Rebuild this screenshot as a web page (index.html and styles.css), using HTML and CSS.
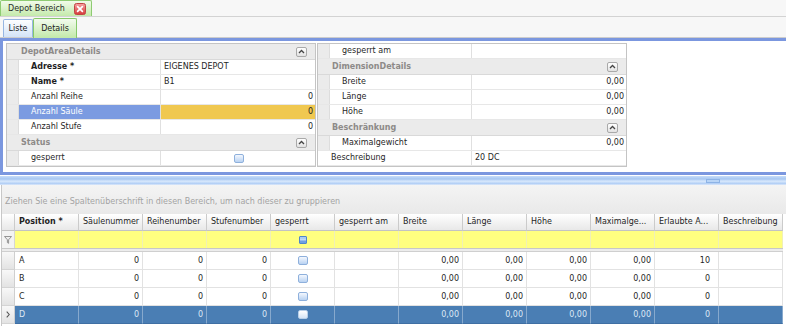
FILE: index.html
```html
<!DOCTYPE html>
<html lang="de">
<head>
<meta charset="utf-8">
<title>Depot Bereich</title>
<link rel="stylesheet" href="styles.css">
</head>
<body>
<div class="app">
  <div class="doc-tabs">
    <div class="doc-tab">
      <span>Depot Bereich</span>
      <span class="close"><svg width="12" height="12" viewBox="0 0 12 12"><defs><linearGradient id="rg" x1="0" y1="0" x2="0" y2="1"><stop offset="0" stop-color="#f7a3a3"/><stop offset="1" stop-color="#d63a3a"/></linearGradient></defs><rect x="0.5" y="0.5" width="11" height="11" rx="2" fill="url(#rg)" stroke="#c04444"/><path d="M3.6 3.6 L8.4 8.4 M8.4 3.6 L3.6 8.4" stroke="#fff" stroke-width="1.7" stroke-linecap="round"/></svg></span>
    </div>
  </div>
  <div class="view-tabs">
    <div class="vtab liste">Liste</div>
    <div class="vtab details">Details</div>
  </div>
  <div class="detail-panel">
    <div class="pgrid">
      <div class="pg-cat"><span class="cat-title">DepotAreaDetails</span><span class="collapse"><svg width="7" height="5" viewBox="0 0 7 5"><path d="M1 4 L3.5 1.5 L6 4" fill="none" stroke="#444" stroke-width="1.3"/></svg></span></div>
      <div class="pg-row"><span class="pg-strip"></span><span class="pg-label bold">Adresse *</span><span class="pg-value">EIGENES DEPOT</span></div>
      <div class="pg-row"><span class="pg-strip"></span><span class="pg-label bold">Name *</span><span class="pg-value">B1</span></div>
      <div class="pg-row"><span class="pg-strip"></span><span class="pg-label">Anzahl Reihe</span><span class="pg-value num">0</span></div>
      <div class="pg-row focused"><span class="pg-strip"></span><span class="pg-label">Anzahl Säule</span><span class="pg-value num">0</span></div>
      <div class="pg-row"><span class="pg-strip"></span><span class="pg-label">Anzahl Stufe</span><span class="pg-value num">0</span></div>
      <div class="pg-cat"><span class="cat-title">Status</span><span class="collapse"><svg width="7" height="5" viewBox="0 0 7 5"><path d="M1 4 L3.5 1.5 L6 4" fill="none" stroke="#444" stroke-width="1.3"/></svg></span></div>
      <div class="pg-row"><span class="pg-strip"></span><span class="pg-label">gesperrt</span><span class="pg-value center"><span class="chk"></span></span></div>
    </div>
    <div class="pgrid">
      <div class="pg-row"><span class="pg-strip"></span><span class="pg-label">gesperrt am</span><span class="pg-value"></span></div>
      <div class="pg-cat"><span class="cat-title">DimensionDetails</span><span class="collapse"><svg width="7" height="5" viewBox="0 0 7 5"><path d="M1 4 L3.5 1.5 L6 4" fill="none" stroke="#444" stroke-width="1.3"/></svg></span></div>
      <div class="pg-row"><span class="pg-strip"></span><span class="pg-label">Breite</span><span class="pg-value num">0,00</span></div>
      <div class="pg-row"><span class="pg-strip"></span><span class="pg-label">Länge</span><span class="pg-value num">0,00</span></div>
      <div class="pg-row"><span class="pg-strip"></span><span class="pg-label">Höhe</span><span class="pg-value num">0,00</span></div>
      <div class="pg-cat"><span class="cat-title">Beschränkung</span><span class="collapse"><svg width="7" height="5" viewBox="0 0 7 5"><path d="M1 4 L3.5 1.5 L6 4" fill="none" stroke="#444" stroke-width="1.3"/></svg></span></div>
      <div class="pg-row"><span class="pg-strip"></span><span class="pg-label">Maximalgewicht</span><span class="pg-value num">0,00</span></div>
      <div class="pg-row"><span class="pg-label top">Beschreibung</span><span class="pg-value">20 DC</span></div>
    </div>
  </div>
  <div class="splitter"><span class="grip"></span></div>
  <div class="grid-panel">
    <div class="groupbar">Ziehen Sie eine Spaltenüberschrift in diesen Bereich, um nach dieser zu gruppieren</div>
    <div class="grow ghead">
      <div class="gc ind"></div>
      <div class="gc bold">Position *</div>
      <div class="gc">Säulenummer</div>
      <div class="gc">Reihenumber</div>
      <div class="gc">Stufenumber</div>
      <div class="gc">gesperrt</div>
      <div class="gc">gesperrt am</div>
      <div class="gc">Breite</div>
      <div class="gc">Länge</div>
      <div class="gc">Höhe</div>
      <div class="gc">Maximalge...</div>
      <div class="gc">Erlaubte A...</div>
      <div class="gc">Beschreibung</div>
    </div>
    <div class="grow frow">
      <div class="gc ind"><svg width="8" height="8" viewBox="0 0 8 8"><path d="M0.5 0.5 H7.5 L4.6 3.8 V7.3 L3.4 6.6 V3.8 Z" fill="#eeeeee" stroke="#8a8a8a" stroke-width="0.9" stroke-linejoin="round"/></svg></div>
      <div class="gc"></div>
      <div class="gc"></div>
      <div class="gc"></div>
      <div class="gc"></div>
      <div class="gc cb"><span class="fchk"></span></div>
      <div class="gc"></div>
      <div class="gc"></div>
      <div class="gc"></div>
      <div class="gc"></div>
      <div class="gc"></div>
      <div class="gc"></div>
      <div class="gc"></div>
    </div>
    <div class="gsep"></div>
    <div class="grow drow">
      <div class="gc ind"></div>
      <div class="gc">A</div>
      <div class="gc num">0</div>
      <div class="gc num">0</div>
      <div class="gc num">0</div>
      <div class="gc cb"><span class="chk"></span></div>
      <div class="gc"></div>
      <div class="gc num">0,00</div>
      <div class="gc num">0,00</div>
      <div class="gc num">0,00</div>
      <div class="gc num">0,00</div>
      <div class="gc num wide">10</div>
      <div class="gc"></div>
    </div>
    <div class="grow drow">
      <div class="gc ind"></div>
      <div class="gc">B</div>
      <div class="gc num">0</div>
      <div class="gc num">0</div>
      <div class="gc num">0</div>
      <div class="gc cb"><span class="chk"></span></div>
      <div class="gc"></div>
      <div class="gc num">0,00</div>
      <div class="gc num">0,00</div>
      <div class="gc num">0,00</div>
      <div class="gc num">0,00</div>
      <div class="gc num wide">0</div>
      <div class="gc"></div>
    </div>
    <div class="grow drow">
      <div class="gc ind"></div>
      <div class="gc">C</div>
      <div class="gc num">0</div>
      <div class="gc num">0</div>
      <div class="gc num">0</div>
      <div class="gc cb"><span class="chk"></span></div>
      <div class="gc"></div>
      <div class="gc num">0,00</div>
      <div class="gc num">0,00</div>
      <div class="gc num">0,00</div>
      <div class="gc num">0,00</div>
      <div class="gc num wide">0</div>
      <div class="gc"></div>
    </div>
    <div class="grow drow sel">
      <div class="gc ind"><svg width="4" height="7" viewBox="0 0 4 7"><path d="M0.7 0.7 L3.2 3.5 L0.7 6.3" fill="none" stroke="#555" stroke-width="1.1"/></svg></div>
      <div class="gc">D</div>
      <div class="gc num">0</div>
      <div class="gc num">0</div>
      <div class="gc num">0</div>
      <div class="gc cb"><span class="chk"></span></div>
      <div class="gc"></div>
      <div class="gc num">0,00</div>
      <div class="gc num">0,00</div>
      <div class="gc num">0,00</div>
      <div class="gc num">0,00</div>
      <div class="gc num wide">0</div>
      <div class="gc"></div>
    </div>
  </div>
</div>
</body>
</html>
```

FILE: styles.css
```css
* { box-sizing: border-box; }
html, body { margin: 0; padding: 0; }
body {
  width: 786px;
  height: 326px;
  overflow: hidden;
  background: #fff;
  font-family: "DejaVu Sans", sans-serif;
  font-size: 8px;
  color: #1f1f1f;
}
.app { display: flex; flex-direction: column; width: 786px; height: 326px; }
.bold { font-weight: bold; }

/* document tabs */
.doc-tabs {
  height: 17px; flex: none; display: flex;
  background: #f7f7f7; border-bottom: 1px solid #d3d3d3;
}
.doc-tab {
  width: 92px; height: 16px; display: flex; align-items: center;
  padding: 0 5px 0 7px;
  background: linear-gradient(#f1fbea, #c4eaab);
  border: 1px solid #8ecb72; border-bottom: none;
  border-radius: 2px 2px 0 0; color: #2a2a2a;
}
.doc-tab .close { margin-left: auto; display: flex; }

/* view tabs */
.view-tabs {
  height: 21px; flex: none; display: flex; align-items: flex-end;
  padding-left: 3px; background: #f7f7f7; border-bottom: 1px solid #cdcdcd;
}
.vtab {
  display: flex; align-items: center; justify-content: center;
  border-radius: 2px 2px 0 0; color: #222;
}
.vtab.liste {
  width: 30px; height: 18px;
  background: linear-gradient(#fdfeff, #d4e4f7);
  border: 1px solid #97b6e2; border-bottom: none;
}
.vtab.details {
  width: 44px; height: 20px; margin-bottom: -1px; z-index: 1;
  background: linear-gradient(#f3fbee, #c2e9a9);
  border: 1px solid #86c96a; border-bottom: none;
}

/* detail panel */
.detail-panel {
  height: 137px; flex: none; display: flex; align-items: flex-start; gap: 1px;
  padding: 2px 0 0 3px;
  border: 3px solid #7b97df; border-right: none; background: #fff;
}
.pgrid { width: 310px; border: 1px solid #c4c4c4; background: #fff; }
.pg-cat {
  height: 16px; display: flex; align-items: center;
  padding: 0 8px 0 14px;
  background: #ebebeb; border-bottom: 1px solid #d9d9d9;
  font-weight: bold; color: #8d8a88;
}
.cat-title { flex: 1; }
.collapse {
  width: 11px; height: 10px; display: flex; align-items: center; justify-content: center;
  border: 1px solid #a9a9a9; border-radius: 2px;
  background: linear-gradient(#ffffff, #e2e2e2);
}
.pg-row { height: 15px; display: flex; border-bottom: 1px solid #e7e7e7; }
.pg-strip { width: 12px; flex: none; background: #ebebeb; border-right: 1px solid #dddddd; }
.pg-label {
  width: 142px; flex: none; padding-left: 12px; line-height: 14px;
  border-right: 1px solid #e0e0e0; white-space: nowrap;
}
.pg-label.top { width: 154px; padding-left: 13px; }
.pg-value { flex: 1; padding: 0 2px 0 3px; line-height: 14px; white-space: nowrap; }
.pg-value.num { text-align: right; }
.pg-value.center { display: flex; align-items: center; justify-content: center; }
.pg-row.focused .pg-label { background: #7b9be1; color: #fff; }
.pg-row.focused .pg-value { background: #f0c850; }

.chk {
  display: inline-block; width: 10px; height: 9px;
  border: 1px solid #8eb0dc; border-radius: 2px;
  background: linear-gradient(#f4f8fe, #b9d2f2);
}
.fchk {
  display: inline-block; width: 8px; height: 8px;
  border: 1px solid #4f86cc; border-radius: 1px;
  background: linear-gradient(#a9cdf5 0, #a9cdf5 40%, #e8f2fd 45%, #e8f2fd 55%, #6f9fe0 60%, #6f9fe0 100%);
}

/* splitter */
.splitter {
  height: 10px; flex: none; display: flex; align-items: center; justify-content: flex-end;
  padding: 1px 66px 0 0;
  background: linear-gradient(#ffffff 0, #ffffff 10%, #c6dcf8 10%, #a7c7f2 40%, #d8e8fc 62%, #b4d0f6 85%, #dde9fa 100%);
}
.grip { width: 14px; height: 4px; border: 1px solid #8db3e6; background: #b8d4f6; }

/* grid */
.grid-panel { flex: 1; margin-left: 1px; border-left: 1px solid #c8c8c8; background: #fff; }
.groupbar {
  height: 29px; display: flex; align-items: center; padding: 4px 0 0 3px;
  background: linear-gradient(#f4f4f4, #e9e9e9); color: #a3a3a3; white-space: nowrap;
}
.grow { display: grid; grid-template-columns: 13px repeat(12, 64px); }
.gc {
  border-right: 1px solid #e2e2e2; border-bottom: 1px solid #e2e2e2;
  padding: 0 3px 0 4px; white-space: nowrap; overflow: hidden;
}
.gc.num { text-align: right; }
.gc.num.wide { padding-right: 8px; }
.gc.cb { display: flex; align-items: center; justify-content: center; padding: 0; }
.gc.ind {
  padding: 0; display: flex; align-items: center; justify-content: center;
  background: linear-gradient(#f8f8f8, #e3e3e3);
  border-right-color: #cfcfcf; border-bottom-color: #d4d4d4;
}
.ghead .gc {
  height: 17px; line-height: 16px;
  background: linear-gradient(#ffffff, #e8e8e8);
  border-right-color: #cbcbcb; border-bottom-color: #c3c3c3;
}
.frow .gc { height: 17px; background: #ffff80; border-right-color: #f0f0b6; border-bottom: none; }
.frow .gc.ind { background: #f3f3f3; border-right-color: #d6d6d6; }
.gsep {
  width: 781px; height: 4px;
  border-top: 1px solid #c8c8c8; border-bottom: 1px solid #cfcfcf; background: #ececec;
}
.drow .gc { height: 18px; line-height: 17px; }
.drow.sel .gc { background: #4a7eb4; color: #dde8f4; border-right-color: #87a9cd; border-bottom-color: #3f6fa3; }
.drow.sel .gc.ind { background: linear-gradient(#f8f8f8, #e3e3e3); border-right-color: #cfcfcf; border-bottom-color: #d4d4d4; }
.drow.sel .chk { border-color: #b8cfe8; background: linear-gradient(#ffffff, #d6e5f6); }
```
